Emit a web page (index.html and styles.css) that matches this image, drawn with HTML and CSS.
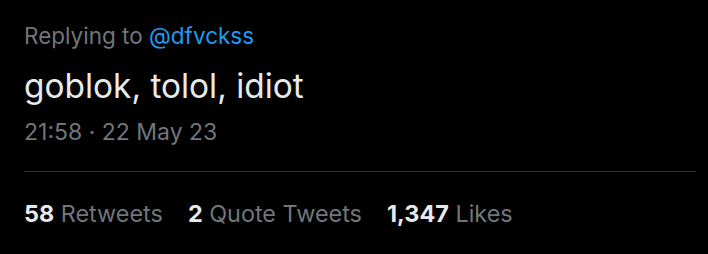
FILE: index.html
```html
<!DOCTYPE html>
<html>
<head>
<meta charset="utf-8">
<link rel="stylesheet" href="styles.css">
</head>
<body>
<div class="tweet">
  <div class="reply">Replying to <span class="handle">@dfvckss</span></div>
  <div class="text">goblok, tolol, idiot</div>
  <div class="time">21:58 · 22 May 23</div>
  <div class="sep"></div>
  <div class="stats">
    <span class="stat"><b>58</b> Retweets</span>
    <span class="stat"><b>2</b> Quote Tweets</span>
    <span class="stat"><b>1,347</b> Likes</span>
  </div>
</div>
</body>
</html>
```
FILE: styles.css
```css
html, body {
  margin: 0;
  background: #000;
}
.tweet {
  padding: 0 12px 0 24px;
  font-family: Inter, "Noto Sans", sans-serif;
  color: #e7e9ea;
}
.reply {
  padding-top: 22px;
  font-size: 22.5px;
  line-height: 28px;
  color: #71767b;
}
.handle { color: #1d9bf0; }
.text {
  margin-top: 16px;
  font-size: 33.4px;
  line-height: 40px;
}
.time {
  margin-top: 12px;
  font-size: 23px;
  line-height: 28px;
  color: #71767b;
}
.sep {
  margin-top: 25px;
  height: 1px;
  background: #2f3336;
}
.stats {
  display: flex;
  gap: 25px;
  padding-top: 28px;
  font-size: 23.4px;
  line-height: 28px;
  color: #71767b;
}
.stat b {
  color: #e7e9ea;
  font-weight: 700;
}
```
